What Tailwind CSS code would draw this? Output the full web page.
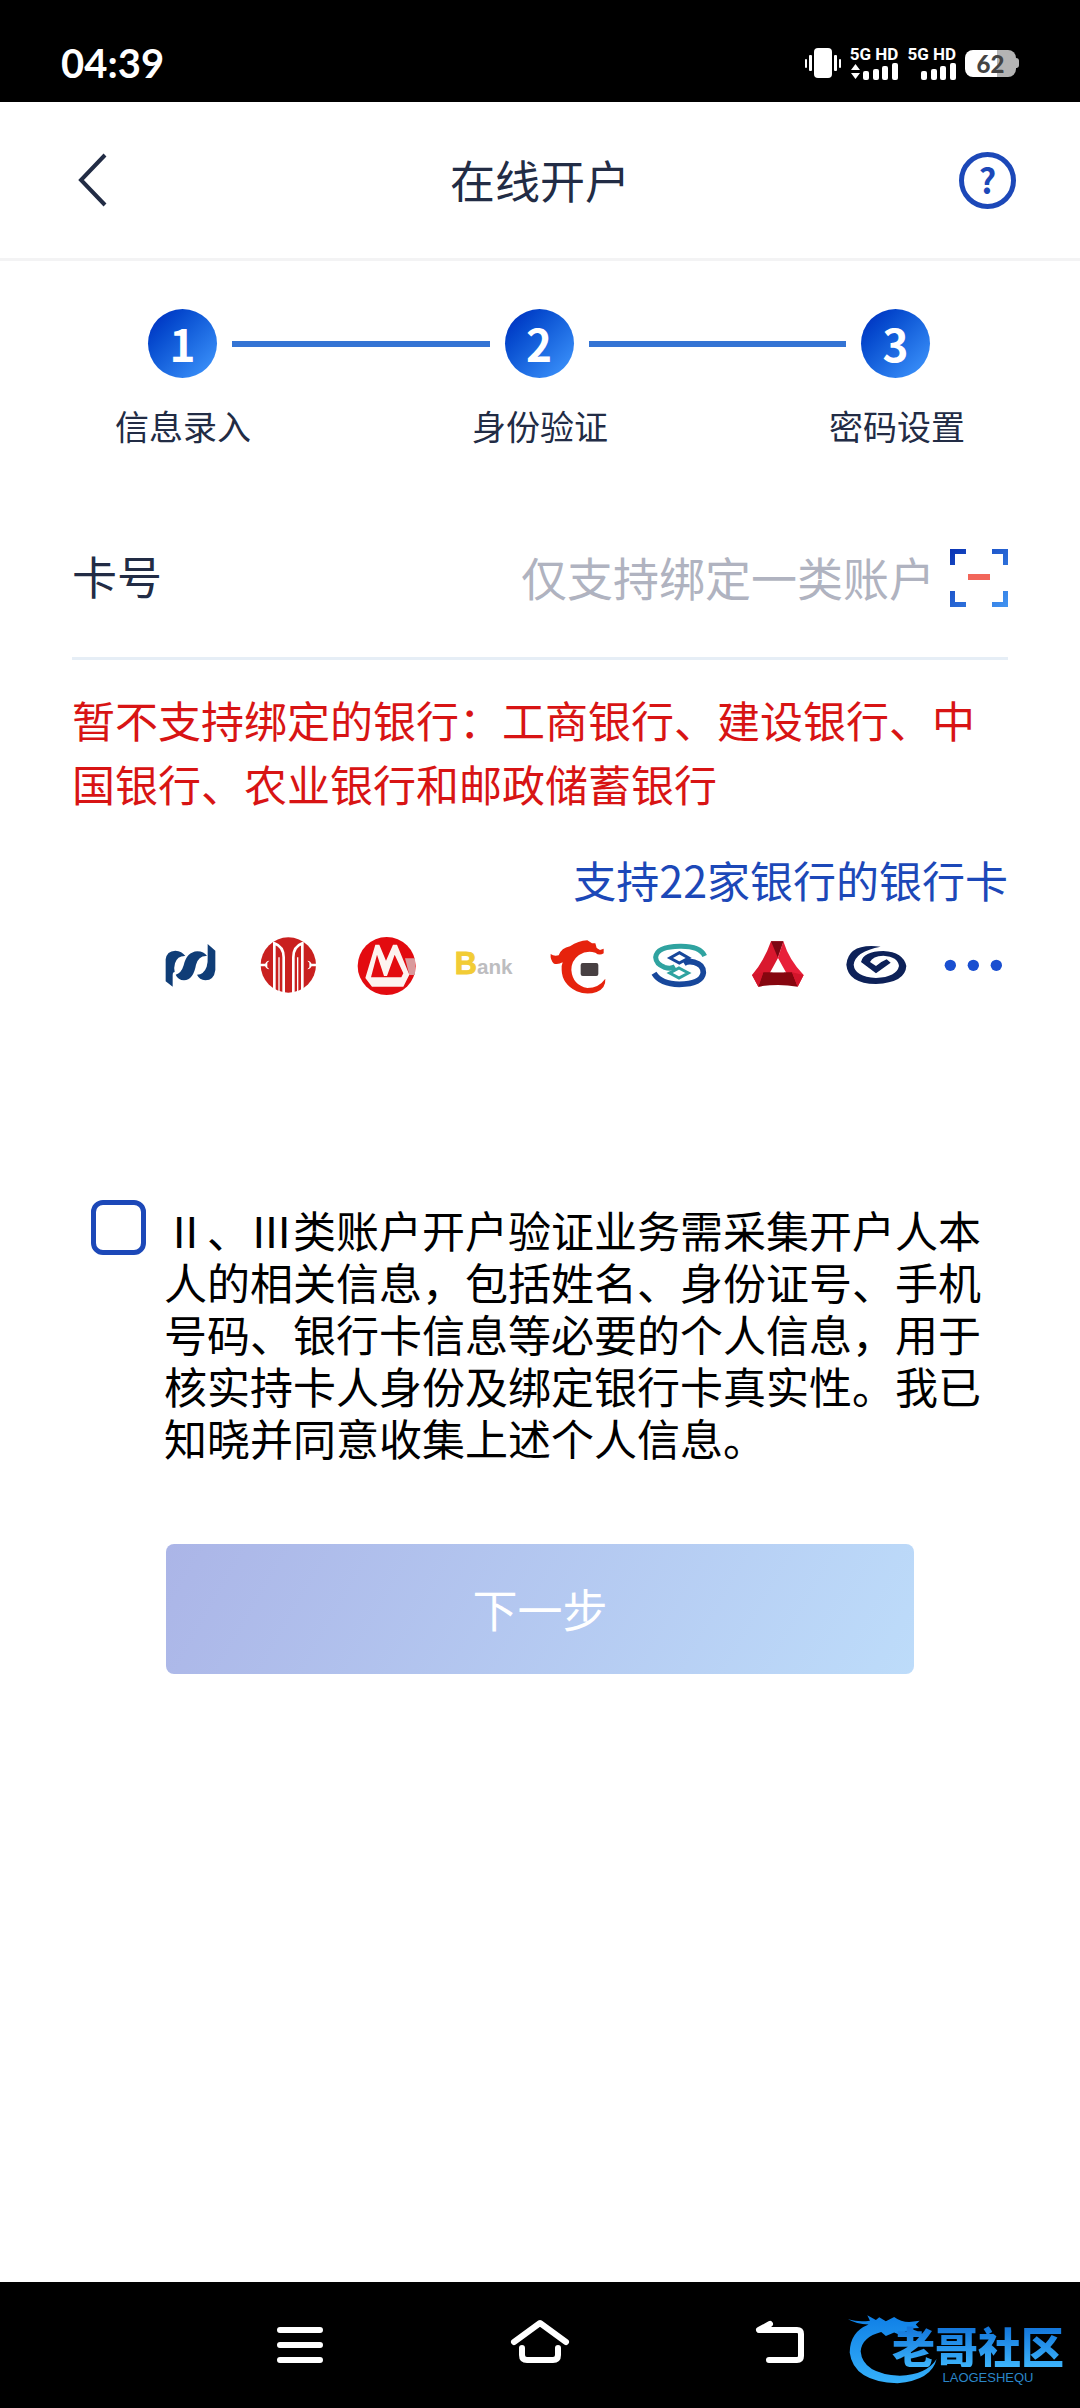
<!DOCTYPE html>
<html lang="zh-CN">
<head>
    <meta charset="UTF-8">
    <meta name="viewport" content="width=device-width, initial-scale=1.0">
    <title>在线开户</title>
    <script src="https://cdn.jsdelivr.net/npm/@tailwindcss/browser@4"></script>
</head>
<body class="bg-white min-h-screen flex flex-col font-['Noto_Sans_CJK_SC',sans-serif] text-[#222c45]">

    <!-- Status bar -->
    <div class="bg-black text-white h-[102px] pt-6 px-[61px] flex items-center justify-between">
        <span class="font-['Lato',sans-serif] font-bold text-[40px] leading-none">04:39</span>
        <div class="flex items-center gap-[9px]">
            <svg class="w-9 h-[30px]" viewBox="0 0 36 30" fill="#fff">
                <rect x="9" y="0" width="18" height="30" rx="4"/>
                <rect x="0" y="11" width="2" height="9" rx="1"/>
                <rect x="4" y="7" width="3" height="16" rx="1"/>
                <rect x="29" y="7" width="3" height="16" rx="1"/>
                <rect x="34" y="11" width="2" height="9" rx="1"/>
            </svg>
            <div class="flex flex-col items-end">
                <span class="font-['Roboto',sans-serif] font-bold text-[17px] leading-[17px]">5G HD</span>
                <svg class="w-12 h-[17px]" viewBox="0 0 48 17" fill="#fff">
                    <path d="M5.500 1l4.500 6H1zM5.500 16L1 10h9z"/>
                    <rect x="13" y="8" width="6" height="9" rx="2"/>
                    <rect x="23" y="6" width="6" height="11" rx="2"/>
                    <rect x="32" y="3" width="6" height="14" rx="2"/>
                    <rect x="42" y="0" width="6" height="17" rx="2"/>
                </svg>
            </div>
            <div class="flex flex-col items-end">
                <span class="font-['Roboto',sans-serif] font-bold text-[17px] leading-[17px]">5G HD</span>
                <svg class="w-12 h-[17px]" viewBox="0 0 48 17" fill="#fff">
                    <rect x="13" y="8" width="6" height="9" rx="2"/>
                    <rect x="23" y="6" width="6" height="11" rx="2"/>
                    <rect x="32" y="3" width="6" height="14" rx="2"/>
                    <rect x="42" y="0" width="6" height="17" rx="2"/>
                </svg>
            </div>
            <div class="flex items-center">
                <span class="w-[51px] h-[27px] rounded-lg bg-linear-to-r from-white from-62% to-[#b4b4b4] to-62% text-[#444] font-['Lato',sans-serif] font-black text-2xl leading-[27px] text-center">62</span>
                <span class="w-[3px] h-[10px] rounded-r-sm bg-[#b4b4b4]"></span>
            </div>
        </div>
    </div>

    <!-- Header -->
    <header class="h-[159px] border-b-3 border-[#f3f3f4] px-16 flex items-center justify-between">
        <button type="button" aria-label="返回" class="w-[57px] h-[57px]">
            <svg class="w-full h-full" viewBox="0 0 57 57" fill="none" stroke="#222c45" stroke-width="4">
                <path d="M41 3L17 28L41 53"/>
            </svg>
        </button>
        <h1 class="text-[45px] leading-[64px]">在线开户</h1>
        <button type="button" aria-label="帮助" class="w-[57px] h-[57px] rounded-full border-5 border-[#1c48b8] text-[#1c48b8] font-bold text-[34px] leading-[46px]">?</button>
    </header>

    <main class="flex-1">
        <!-- Steps -->
        <div class="mt-12 pl-[148px] pr-[150px] flex items-center gap-[15px] text-white font-bold text-[44px] leading-[69px] text-center">
            <span class="w-[69px] h-[69px] rounded-full bg-linear-to-br from-[#0424bb] to-[#4299ff]">1</span>
            <span class="flex-1 h-[6px] bg-[#3474d4]"></span>
            <span class="w-[69px] h-[69px] rounded-full bg-linear-to-br from-[#0424bb] to-[#4299ff]">2</span>
            <span class="flex-1 h-[6px] bg-[#3474d4]"></span>
            <span class="w-[69px] h-[69px] rounded-full bg-linear-to-br from-[#0424bb] to-[#4299ff]">3</span>
        </div>
        <div class="mt-6 px-[115px] flex justify-between text-[34px] leading-[48px]">
            <span>信息录入</span>
            <span>身份验证</span>
            <span>密码设置</span>
        </div>

        <form class="mt-12 px-[72px]">
            <!-- Card number -->
            <div class="h-[162px] border-b-3 border-[#e6eef6] flex items-center">
                <label for="card" class="pb-1 text-[45px] leading-[64px]">卡号</label>
                <input id="card" type="text" inputmode="numeric" placeholder="仅支持绑定一类账户" class="flex-1 min-w-0 mr-[15px] pb-1 text-right text-[46px] leading-[64px] outline-none placeholder:text-[#b0b3c0]">
                <button type="button" aria-label="扫描银行卡" class="w-[58px] h-[58px]">
                    <svg class="w-full h-full" viewBox="0 0 58 58">
                        <defs>
                            <linearGradient id="scan" gradientUnits="userSpaceOnUse" x1="0" y1="0" x2="58" y2="58">
                                <stop offset="0" stop-color="#0a33b4"/>
                                <stop offset="1" stop-color="#4295f2"/>
                            </linearGradient>
                        </defs>
                        <path d="M0 0H16V5H5V16H0zM42 0H58V16H53V5H42zM0 42H5V53H16V58H0zM53 42H58V58H42V53H53z" fill="url(#scan)"/>
                        <rect x="18" y="25" width="22" height="6" fill="#f2665a"/>
                    </svg>
                </button>
            </div>

            <p class="mt-[27px] text-[43px] leading-[64px] text-[#d81414]">暂不支持绑定的银行：工商银行、建设银行、中国银行、农业银行和邮政储蓄银行</p>
            <p class="mt-8 text-[43px] leading-[64px] text-right"><a href="#" class="text-[#1c48b8]">支持22家银行的银行卡</a></p>

            <!-- Bank logos -->
            <div class="mt-[21px] flex justify-end gap-[30px]">
                <svg class="w-[68px] h-[68px]" viewBox="48 36 204 204" fill="#0f3d77">
                    <path d="M77 184V118Q80 93 106 92Q126 93 136 108Q112 107 105 130Q101 144 104 156Q98 156 98 166V200Z"/>
                    <path d="M107 164Q124 160 131 136Q140 96 172 94Q192 94 201 108Q176 106 168 134Q160 180 132 181Q114 180 107 164Z"/>
                    <path d="M171 164Q192 163 200 140Q204 128 203 110V72L226 92V150Q222 181 196 181Q178 179 171 164Z"/>
                </svg>
                <svg class="w-[68px] h-[68px]" viewBox="342 36 204 204">
                    <circle cx="445" cy="135" r="83" fill="#c9201f"/>
                    <g fill="none" stroke="#fff" stroke-width="8">
                        <path d="M403 216V70Q431 80 431 112V224M487 216V70Q460 80 460 112V224"/>
                        <path d="M417 112V220M473 112V220" stroke-width="4"/>
                        <path d="M360 135H378M512 135H530" stroke-width="7"/>
                    </g>
                    <path d="M388 122A13 13 0 1 0 388 148L382 142V128ZM502 122A13 13 0 1 1 502 148L508 142V128Z" fill="#fff"/>
                </svg>
                <svg class="w-[68px] h-[68px]" viewBox="636 36 204 204">
                    <circle cx="740" cy="138" r="87" fill="#e30b10"/>
                    <path d="M795 115H825V165H808Z" fill="#d99a9c"/>
                    <path d="M676 174L706 74H718L738 122L759 74H771L808 164L790 200H696Z" fill="#fdf3f0"/>
                    <path d="M711 104L732 168H741L764 104L790 160L784 172H693Z" fill="#e30b10"/>
                    <path d="M718 122L735 164L757 122L738 144Z" fill="#fdf3f0"/>
                </svg>
                <svg class="w-[68px] h-[68px]" viewBox="60 36 204 204" font-family="Liberation Sans, sans-serif" font-weight="bold">
                    <text x="74" y="162" font-size="92" fill="#f2cc35" stroke="#f2cc35" stroke-width="3">B</text>
                    <text x="141" y="163" font-size="62" fill="#bdbdc0">ank</text>
                </svg>
                <svg class="w-[68px] h-[68px]" viewBox="354 36 204 204">
                    <path d="M362 102Q372 110 386 106Q394 84 420 79Q445 62 472 61L486 70L496 70L500 84L510 90L521 86V100Q508 108 496 98Q470 90 447 105Q424 122 424 150Q428 196 472 204Q506 204 526 176Q528 204 500 216Q470 226 440 214Q396 192 395 150Q394 136 398 127Q386 134 372 131Q360 120 362 102Z" fill="#e6230d"/>
                    <rect x="452" y="129" width="53" height="39" rx="6" fill="#474042"/>
                </svg>
                <svg class="w-[68px] h-[68px]" viewBox="648 36 204 204" fill="none">
                    <path d="M824 108Q810 78 750 79Q680 80 677 112Q678 132 704 142Q722 148 735 140" stroke="#2fa3a0" stroke-width="15"/>
                    <path d="M672 160Q692 193 748 193Q816 192 820 158Q820 134 793 127Q775 122 762 130" stroke="#17479b" stroke-width="17"/>
                    <path d="M748 98L776 114L748 129L720 114Z" stroke="#17479b" stroke-width="9"/>
                    <path d="M747 144L775 159L747 174L719 159Z" stroke="#2fa3a0" stroke-width="9"/>
                </svg>
                <svg class="w-[68px] h-[68px]" viewBox="72 36 204 204">
                    <path d="M153 64H190L174 114L128 198L115 200L96 165Q134 120 153 64Z" fill="#d9182e"/>
                    <path d="M190 64Q208 122 251 165L233 200L206 172L174 114Z" fill="#e8203a"/>
                    <path d="M153 64H190L173 112Z" fill="#7d0713"/>
                    <path d="M130 157H216L233 200Q174 190 115 200Z" fill="#86060f"/>
                    <path d="M96 165L130 157L115 200ZM251 165L216 157L233 200Z" fill="#d4152b"/>
                    <path d="M174 118L192 157H157Z" fill="#fff"/>
                </svg>
                <svg class="w-[68px] h-[68px]" viewBox="366 36 204 204">
                    <path d="M482 80Q385 68 379 134Q384 190 468 192Q556 188 559 138Q550 96 490 93Q430 94 423 126L468 160L512 128L500 118L484 126L468 138L450 126Q458 108 490 107Q534 110 537 138Q530 171 468 174Q404 170 401 134Q406 94 482 80Z" fill="#0d2158"/>
                </svg>
                <button type="button" aria-label="更多银行" class="w-[68px] h-[68px]">
                    <svg class="w-full h-full" viewBox="660 36 204 204" fill="#1a4fd0">
                        <circle cx="691" cy="136" r="17"/>
                        <circle cx="760" cy="136" r="17"/>
                        <circle cx="829" cy="136" r="17"/>
                    </svg>
                </button>
            </div>

            <!-- Consent -->
            <div class="mt-[200px] pl-[19px] pr-6 flex items-start gap-[18px]">
                <input id="agree" type="checkbox" class="appearance-none shrink-0 w-[55px] h-[55px] border-5 border-[#1c48b8] rounded-xl checked:bg-[#1c48b8]">
                <label for="agree" class="pt-[3px] text-[43px] leading-[52px] text-black">Ⅱ、Ⅲ类账户开户验证业务需采集开户人本人的相关信息，包括姓名、身份证号、手机号码、银行卡信息等必要的个人信息，用于核实持卡人身份及绑定银行卡真实性。我已知晓并同意收集上述个人信息。</label>
            </div>

            <div class="mt-[81px] px-[94px]">
                <button type="submit" class="w-full h-[130px] rounded-lg bg-linear-120 from-[#abb5e7] to-[#bddcfa] text-white text-[45px]">下一步</button>
            </div>
        </form>
    </main>

    <!-- System navigation -->
    <nav class="relative bg-black h-[126px] flex items-center justify-center gap-[180px]">
        <button type="button" aria-label="最近任务" class="w-[60px] h-[60px]">
            <svg class="w-full h-full" viewBox="0 0 60 60" fill="none" stroke="#fff" stroke-width="6" stroke-linecap="round">
                <path d="M10 15H50M10 30H50M10 45H50"/>
            </svg>
        </button>
        <button type="button" aria-label="主页" class="w-[60px] h-[60px]">
            <svg class="w-full h-full" viewBox="0 0 60 60" fill="none" stroke="#fff" stroke-width="6" stroke-linecap="round" stroke-linejoin="round">
                <path d="M4 27L30 8L56 27M12 33V40Q12 45 17 45H43Q48 45 48 40V33"/>
            </svg>
        </button>
        <button type="button" aria-label="返回上一页" class="w-[60px] h-[60px]">
            <svg class="w-full h-full" viewBox="0 0 60 60" fill="none" stroke="#fff" stroke-width="6" stroke-linecap="round" stroke-linejoin="round">
                <path d="M20 9L9 15H47Q51 15 51 19V41Q51 45 47 45H19"/>
            </svg>
        </button>

        <!-- Community mark -->
        <div class="absolute right-4 top-[30px] flex">
            <svg class="w-[93px] h-[73px]" viewBox="60 90 280 220">
                <defs>
                    <linearGradient id="dragon" x1="0" y1="0" x2="0" y2="1">
                        <stop offset="0" stop-color="#0f7fe6"/>
                        <stop offset="1" stop-color="#35b0fa"/>
                    </linearGradient>
                </defs>
                <path d="M66 112Q100 122 132 116L124 100L150 114L160 106L180 118L205 105Q225 120 250 120L282 116L270 128L280 138L252 140L276 148L270 155L240 147L225 160L205 152L180 162L166 150Q108 165 104 208Q110 276 222 282Q302 280 333 232Q318 296 215 305Q82 300 71 212Q72 150 128 128Q90 126 66 112Z" fill="url(#dragon)"/>
            </svg>
            <div class="-ml-[47px] pt-3 flex flex-col items-center gap-1">
                <span class="bg-linear-to-b from-[#1070d8] to-[#3db4fb] bg-clip-text text-transparent font-black text-[43px] leading-[43px]">老哥社区</span>
                <span class="pl-5 font-['Liberation_Sans',sans-serif] text-[13px] leading-none text-[#2a86c8]">LAOGESHEQU</span>
            </div>
        </div>
    </nav>
</body>
</html>
